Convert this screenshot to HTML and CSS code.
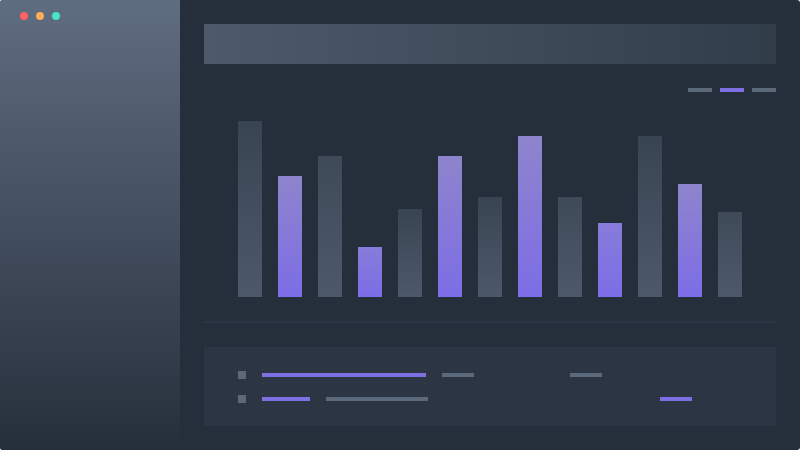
FILE: index.html
```html
<!DOCTYPE html>
<html lang="en">
<head>
<meta charset="utf-8">
<meta name="viewport" content="width=device-width, initial-scale=1">
<link rel="stylesheet" href="styles.css">
</head>
<body>
<div class="window">
  <aside class="sidebar">
    <div class="dots">
      <span class="dot dot-red"></span>
      <span class="dot dot-orange"></span>
      <span class="dot dot-teal"></span>
    </div>
  </aside>
  <main class="main">
    <header class="banner"></header>
    <div class="legend">
      <span class="line short"></span>
      <span class="line short accent"></span>
      <span class="line short"></span>
    </div>
    <section class="chart">
      <div class="bar" style="height:176px"></div>
      <div class="bar violet" style="height:121px"></div>
      <div class="bar mid" style="height:141px"></div>
      <div class="bar violet low" style="height:50px"></div>
      <div class="bar" style="height:88px"></div>
      <div class="bar violet" style="height:141px"></div>
      <div class="bar" style="height:100px"></div>
      <div class="bar violet" style="height:161px"></div>
      <div class="bar mid" style="height:100px"></div>
      <div class="bar violet low" style="height:74px"></div>
      <div class="bar" style="height:161px"></div>
      <div class="bar violet" style="height:113px"></div>
      <div class="bar mid" style="height:85px"></div>
    </section>
    <div class="divider"></div>
    <section class="panel">
      <div class="row">
        <span class="square"></span>
        <span class="line accent long"></span>
        <span class="line label"></span>
        <span class="line label tail-far"></span>
      </div>
      <div class="row">
        <span class="square"></span>
        <span class="line accent brief"></span>
        <span class="line medium"></span>
        <span class="line label accent tail-near"></span>
      </div>
    </section>
  </main>
</div>
</body>
</html>
```
FILE: styles.css
```css
* {
  box-sizing: border-box;
}

body {
  margin: 0;
  background: #fff;
}

.window {
  display: flex;
  min-height: 100vh;
  border-radius: 3px;
  overflow: hidden;
  background: #252f3b;
}

.sidebar {
  flex: 0 0 180px;
  padding: 12px 20px;
  background: linear-gradient(#5f6d80, #465162 45%, #2d3744 88%, #252f3b);
}

.dots {
  display: flex;
  gap: 8px;
}

.dot {
  width: 8px;
  height: 8px;
  border-radius: 50%;
}

.dot-red {
  background: #fc625f;
}

.dot-orange {
  background: #fbad58;
}

.dot-teal {
  background: #4ae2cb;
}

.main {
  flex: 1;
  display: flex;
  flex-direction: column;
  gap: 24px;
  padding: 24px;
}

.banner {
  height: 40px;
  background: linear-gradient(90deg, #4d5a6a, #323d4a);
}

.legend {
  display: flex;
  justify-content: flex-end;
  gap: 8px;
}

.line {
  height: 4px;
  background: #5c697b;
}

.accent {
  background: #7e70e2;
}

.short {
  width: 24px;
}

.label {
  width: 32px;
}

.brief {
  width: 48px;
}

.medium {
  width: 102px;
}

.long {
  width: 164px;
}

.chart {
  flex: 1;
  display: flex;
  justify-content: center;
  align-items: flex-end;
  gap: 16px;
}

.bar {
  width: 24px;
  background: linear-gradient(#394453, #4d5969);
}

.bar.mid {
  background: linear-gradient(#3f4a59, #4d5969);
}

.bar.violet {
  background: linear-gradient(#8e84cc, #7d6de6);
}

.bar.low {
  background: linear-gradient(#877bda, #7d6de6);
}

.divider {
  height: 2px;
  background: #2c3544;
}

.panel {
  display: flex;
  flex-direction: column;
  gap: 16px;
  padding: 24px 34px 23px;
  background: #2c3544;
}

.row {
  display: flex;
  align-items: center;
  gap: 16px;
}

.square {
  width: 8px;
  height: 8px;
  background: #5c697b;
}

.tail-far {
  margin-left: auto;
  margin-right: 140px;
}

.tail-near {
  margin-left: auto;
  margin-right: 50px;
}
```
